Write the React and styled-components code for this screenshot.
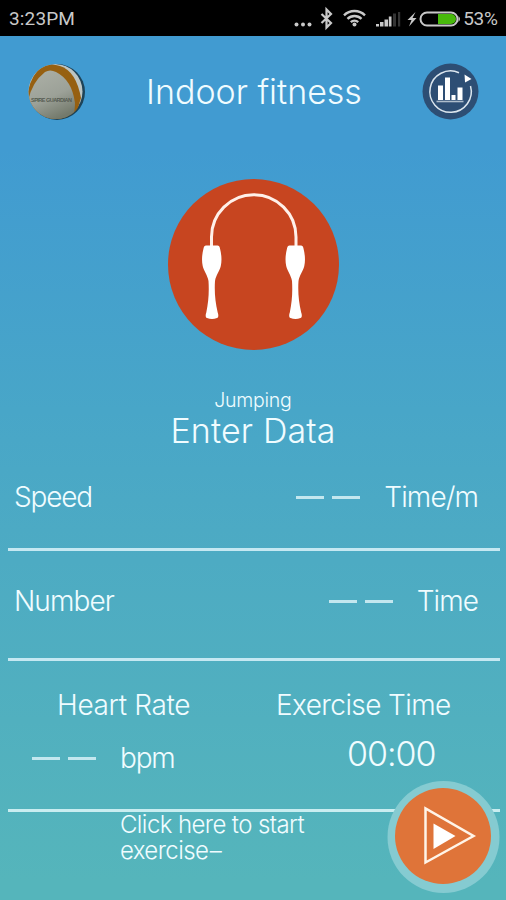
import React from "react";
import styled, { createGlobalStyle } from "styled-components";

const GlobalStyle = createGlobalStyle`
  *, *::before, *::after { box-sizing: border-box; }
  body { margin: 0; background: #55b4bc; }
  svg { display: block; flex: none; }
`;

const Screen = styled.main`
  width: 506px;
  height: 900px;
  overflow: hidden;
  display: flex;
  flex-direction: column;
  color: #f0fcff;
  font-family: Inter, Roboto, sans-serif;
  font-weight: 340;
  background: linear-gradient(180deg, #419bd1 0, #419bd1 150px, #48a6c8 410px, #4dabc3 560px, #55b5bb 880px);
`;

const StatusBar = styled.header`
  height: 36px;
  flex: none;
  display: flex;
  align-items: center;
  justify-content: space-between;
  padding: 1px 8px 0 9px;
  background: #000;
  color: #c9c9c9;
  font-family: Roboto, sans-serif;
  font-weight: 450;
`;

const Label = styled.span`
  display: block;
  white-space: nowrap;
  font-size: ${(p) => p.$size}px;
  line-height: ${(p) => p.$line || 30}px;
  letter-spacing: ${(p) => p.$track || 0}px;
  margin-right: ${(p) => -(p.$track || 0)}px;
`;

const TitleBar = styled.div`
  height: 112px;
  flex: none;
  display: flex;
  align-items: center;
  justify-content: space-between;
  padding: 0 26px 0 28px;
`;

const IconButton = styled.button`
  width: 58px;
  height: 58px;
  padding: 0;
  border: 0;
  background: none;
`;

const Hero = styled.section`
  height: 303px;
  flex: none;
  display: flex;
  flex-direction: column;
  align-items: center;
  padding-top: 31px;
`;

const Captions = styled.div`
  display: flex;
  flex-direction: column;
  align-items: center;
  padding-top: 40px;
`;

const MetricRow = styled.section`
  flex: none;
  height: ${(p) => p.$height}px;
  margin: 0 6px 0 8px;
  padding: ${(p) => p.$top}px 21px 0 6px;
  display: flex;
  align-items: flex-start;
  justify-content: space-between;
  border-bottom: 3px solid #c5e8f2;
`;

const Reading = styled.div`
  display: flex;
  align-items: center;
  gap: ${(p) => p.$gap || 24}px;
`;

const Blank = styled.span`
  display: flex;
  gap: 8px;
  &::before, &::after {
    content: "";
    width: 28px;
    height: 3px;
    background: #c3e7ef;
  }
`;

const SessionRow = styled.section`
  flex: none;
  height: 151px;
  margin: 0 6px 0 8px;
  display: grid;
  grid-template-columns: 237px 1fr;
  border-bottom: 3px solid #c9edf0;
`;

const HeartRate = styled.div`
  padding: 29px 0 0 24px;
  display: flex;
  flex-direction: column;
  gap: 23px;
`;

const HeartTitle = styled.div`
  padding-left: 25px;
`;

const Exercise = styled.div`
  padding: 29px 0 0 31px;
  display: flex;
  flex-direction: column;
  gap: 19px;
`;

const Clock = styled.div`
  padding-left: 71px;
`;

const Footer = styled.footer`
  flex: 1;
  display: flex;
  justify-content: space-between;
  align-items: flex-start;
  padding: 0 6px 0 120px;
`;

const PlayButton = styled.button`
  width: 113px;
  height: 113px;
  margin-top: -31px;
  padding: 0;
  border: 0;
  background: none;
`;

function StatusIcons() {
  return (
    <svg width="168" height="30" viewBox="0 0 168 30" fill="none">
      <g fill="#c9c9c9">
        <circle cx="4.500" cy="20.500" r="2" />
        <circle cx="11" cy="20.500" r="2" />
        <circle cx="17.500" cy="20.500" r="2" />
      </g>
      <path d="M29.500 10l9.500 9-4.500 4.500V5.500l4.500 4.500-9.500 9" stroke="#c9c9c9" strokeWidth="2.200" />
      <g transform="translate(1 .8)">
        <g stroke="#c9c9c9" strokeWidth="2.400">
          <path d="M51 10.500a15 15 0 0 1 21 0" />
          <path d="M54.500 14a10 10 0 0 1 14 0" />
          <path d="M57.800 17.300a5.500 5.500 0 0 1 7.400 0" />
        </g>
        <circle cx="61.500" cy="19.800" r="2" fill="#c9c9c9" />
      </g>
      <g transform="translate(1 1)">
        <path d="M83 19h3v2.500h-3zM87 17h3.500v4.500H87zM91.500 14.500H95v7h-3.500zM95.800 11.500h2.700v10h-2.700z" fill="#c9c9c9" />
        <path d="M100 8.500h3v13h-3zM105 7h2.200v14.500H105z" fill="#343434" />
      </g>
      <path d="M123.500 8l-8 8h4l-2.500 6.500 7.500-8.500h-4z" fill="#c9c9c9" />
      <rect x="128.500" y="8.500" width="37" height="13" rx="6.500" stroke="#c9c9c9" strokeWidth="2" />
      <path d="M146 10h13a5 5 0 0 1 0 10h-13z" fill="#48b90c" />
      <path d="M166.500 12q3 3 0 6z" fill="#c9c9c9" />
    </svg>
  );
}

function BallIcon() {
  return (
    <svg width="58" height="58" viewBox="0 0 58 58">
      <defs>
        <linearGradient id="ball" x1="0" y1="0" x2="0.4" y2="1">
          <stop offset="0" stopColor="#adb1a7" />
          <stop offset="0.6" stopColor="#9ca198" />
          <stop offset="1" stopColor="#747a6c" />
        </linearGradient>
        <clipPath id="ballClip"><circle cx="28" cy="28.500" r="27.500" /></clipPath>
      </defs>
      <circle cx="29" cy="29" r="28" fill="#1d4358" />
      <g clipPath="url(#ballClip)">
        <circle cx="27" cy="28.500" r="27.500" fill="#bcc5c3" />
        <path d="M-1 34Q2 12 14 4Q22 0 32 3Q48 8 53 35L46 58H0Z" fill="#966011" />
        <path d="M0 60V38Q4 19 17 9Q22 6 28 9Q44 17 47 40Q47 48 44 60Z" fill="url(#ball)" />
      </g>
      <text x="3" y="39" fontFamily="Liberation Sans, sans-serif" fontSize="5.500" fontWeight="700" fill="#555a50" textLength="41">SPIRE GUARDIAN</text>
    </svg>
  );
}

function StatsIcon() {
  return (
    <svg width="58" height="58" viewBox="0 0 58 58" fill="none">
      <circle cx="28.500" cy="28.500" r="28" fill="#2d4e74" />
      <path d="M48.500 23A20.700 20.700 0 1 1 37 9.700" stroke="#dce6ee" strokeWidth="1.500" />
      <path d="M42.500 11.500l7 4.500-6.500 3.500z" fill="#fff" />
      <path d="M16 22.500h5V37h-5zM23 14.500h5V37h-5zM29.500 32h4v5h-4zM35.500 24.500h5V37h-5z" fill="#fff" />
      <path d="M14.500 38.500h27" stroke="#aebdcb" strokeWidth="1.600" />
    </svg>
  );
}

function JumpRope() {
  return (
    <svg width="171" height="171" viewBox="0 0 171 171">
      <circle cx="85.500" cy="85.500" r="85.500" fill="#c74520" />
      <path d="M43.500 70V58a42 42 0 0 1 84.500 0v12" fill="none" stroke="#fff0e9" strokeWidth="3" />
      <g fill="#fff">
        <path id="handle" d="M38 66.500h11.500q2 0 2.500 3C53.500 75 54 82 52.800 87c-1.300 5.500-4.800 9-5.800 15-.7 11 .2 21 2.700 31.500 1 2.500 .8 5-.7 5.500q-5 2-10 0c-1.500-.5-1.700-3-.7-5.500C40.500 123 41.200 113 40.500 102c-1-6-4.500-9.500-5.800-15-1.200-5-.7-12 .8-17.500q.5-3 2.500-3z" />
        <use href="#handle" x="83.500" />
      </g>
    </svg>
  );
}

function PlayIcon() {
  return (
    <svg width="113" height="113" viewBox="0 0 113 113">
      <circle cx="56.500" cy="56" r="56" fill="#85cbd1" />
      <circle cx="56" cy="55" r="48" fill="#df7439" />
      <path d="M38.500 27.500v54L86.500 55z" fill="none" stroke="#fff4e8" strokeWidth="2.500" />
      <path d="M46.500 42.500V68l22-13z" fill="#fff" />
    </svg>
  );
}

const StatusGroup = styled.div`
  display: flex;
  align-items: center;
  gap: 3px;
`;

const Hint = styled.p`
  margin: 0;
  font-size: 24px;
  line-height: 26px;
  letter-spacing: -0.6px;
  white-space: nowrap;
`;

const Dash = styled.span`
  margin-left: 1.5px;
`;

export default function App() {
  return (
    <>
      <GlobalStyle />
      <Screen>
        <StatusBar>
          <Label $size={19} $track={0.15}>3:23PM</Label>
          <StatusGroup>
            <StatusIcons />
            <Label $size={19} $track={-0.2}>53%</Label>
          </StatusGroup>
        </StatusBar>
        <TitleBar>
          <IconButton aria-label="Profile"><BallIcon /></IconButton>
          <Label $size={34} $track={-0.02}>Indoor fitness</Label>
          <IconButton aria-label="Statistics"><StatsIcon /></IconButton>
        </TitleBar>
        <Hero>
          <JumpRope />
          <Captions>
            <Label $size={19.5} $line={21} $track={-0.3}>Jumping</Label>
            <Label $size={34} $line={40} $track={0.15}>Enter Data</Label>
          </Captions>
        </Hero>
        <MetricRow $height={100} $top={31}>
          <Label $size={28} $track={-1.2}>Speed</Label>
          <Reading>
            <Blank />
            <Label $size={28} $track={-0.9}>Time/m</Label>
          </Reading>
        </MetricRow>
        <MetricRow $height={110} $top={35}>
          <Label $size={28} $track={-0.9}>Number</Label>
          <Reading>
            <Blank />
            <Label $size={28} $track={-0.9}>Time</Label>
          </Reading>
        </MetricRow>
        <SessionRow>
          <HeartRate>
            <HeartTitle><Label $size={28} $track={-0.35}>Heart Rate</Label></HeartTitle>
            <Reading>
              <Blank />
              <Label $size={28} $track={-1.2}>bpm</Label>
            </Reading>
          </HeartRate>
          <Exercise>
            <Label $size={28} $track={-0.6}>Exercise Time</Label>
            <Clock><Label $size={34} $track={-1}>00:00</Label></Clock>
          </Exercise>
        </SessionRow>
        <Footer>
          <Hint>
            Click here to start
            <br />
            exercise<Dash>–</Dash>
          </Hint>
          <PlayButton aria-label="Start exercise"><PlayIcon /></PlayButton>
        </Footer>
      </Screen>
    </>
  );
}
